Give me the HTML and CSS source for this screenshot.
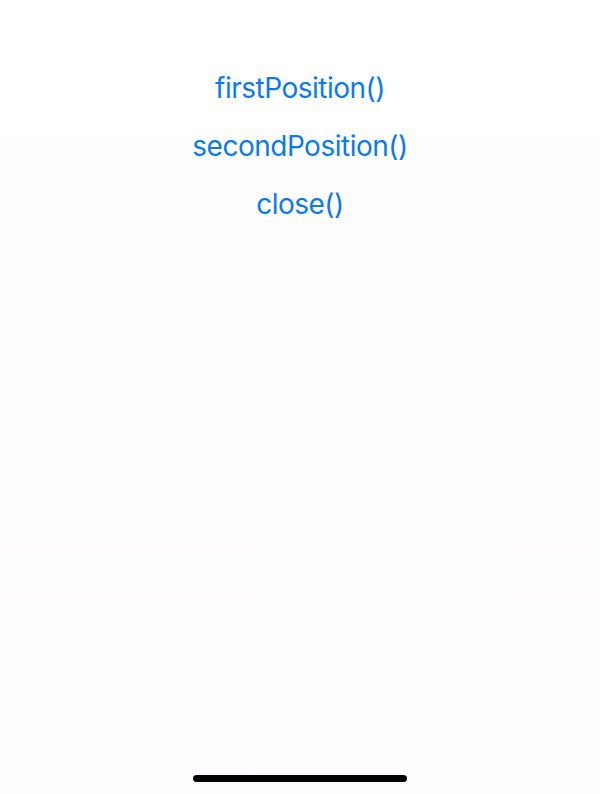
FILE: index.html
```html
<!DOCTYPE html>
<html>
<head>
<meta charset="utf-8">
<link rel="stylesheet" href="styles.css">
</head>
<body>
<div class="screen">
  <div class="buttons">
    <button class="link">firstPosition()</button>
    <button class="link">secondPosition()</button>
    <button class="link">close()</button>
  </div>
  <div class="home-indicator"></div>
</div>
</body>
</html>
```
FILE: styles.css
```css
html, body {
  margin: 0;
  padding: 0;
  background: #ffffff;
}
.screen {
  width: 600px;
  height: 794px;
  display: flex;
  flex-direction: column;
  align-items: center;
  background: linear-gradient(#ffffff, #fefcfe);
}
.buttons {
  margin-top: 68px;
  display: flex;
  flex-direction: column;
  align-items: center;
  gap: 18px;
}
.link {
  border: 0;
  background: none;
  padding: 0;
  height: 40px;
  line-height: 40px;
  font-family: Inter, "Noto Sans", sans-serif;
  font-size: 28px;
  font-weight: 400;
  color: #0b7aec;
  letter-spacing: -0.5px;
}
.home-indicator {
  margin-top: auto;
  margin-bottom: 12px;
  width: 214px;
  height: 7px;
  border-radius: 4px;
  background: #000;
}
```
